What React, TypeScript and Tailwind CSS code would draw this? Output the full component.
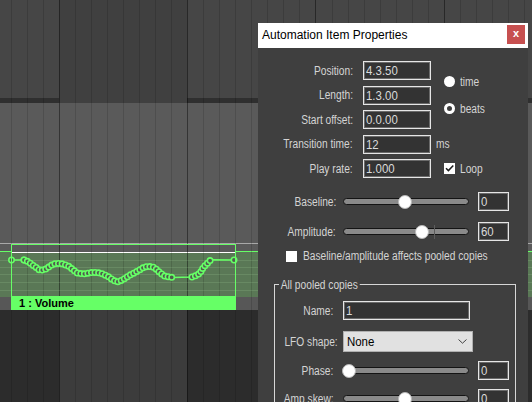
import React from 'react';

type Pt = [number, number];

// envelope shape, page coordinates
const WAVE: Pt[] = [
  [24, 260], [28.3, 261.7], [31.7, 264.3], [36, 267.3], [40, 270.5], [45, 269.5], [49.3, 266.7],
  [53.3, 264], [57.3, 263.3], [63.3, 264], [68.3, 266], [73.3, 270], [77.3, 273], [83.3, 274],
  [87.3, 273.3], [93.3, 272.3], [98.3, 272.7], [103.3, 274], [108.3, 276.7], [113, 280], [117, 282],
  [121, 280.5], [125, 278.3], [130, 275], [134, 273], [138, 270.7], [145, 266.7], [151.7, 266.5],
  [155, 268], [160, 272.7], [165, 276.3], [173, 277.5],
];
const RISE: Pt[] = [
  [192, 277], [195, 276], [200, 273.3], [203.3, 267.3], [207.3, 263.3], [211, 259.7],
];

function sample(pts: Pt[], step: number): Pt[] {
  const out: Pt[] = [pts[0]];
  let carry = 0;
  for (let i = 1; i < pts.length; i++) {
    const [x0, y0] = pts[i - 1];
    const [x1, y1] = pts[i];
    const len = Math.hypot(x1 - x0, y1 - y0);
    let d = step - carry;
    while (d <= len) {
      out.push([x0 + ((x1 - x0) * d) / len, y0 + ((y1 - y0) * d) / len]);
      d += step;
    }
    carry = len - (d - step);
  }
  return out;
}

function Envelope() {
  const line: Pt[] = [[11.5, 260], ...WAVE, ...RISE, [234, 260]];
  const dots: Pt[] = [[11.5, 260], [24, 260], ...sample(WAVE, 3.6), ...sample(RISE, 3.6), [234, 260]];
  return (
    <svg className="absolute left-0 top-0 overflow-visible" width={225} height={43} viewBox="11 253 225 43">
      <polyline
        points={line.map(([x, y]) => `${x},${y}`).join(' ')}
        fill="none"
        stroke="#66ff66"
        strokeWidth={1.6}
      />
      {dots.map(([x, y], i) => (
        <circle key={i} cx={x} cy={y} r={2.7} fill="#505a4e" stroke="#66ff66" strokeWidth={1.6} />
      ))}
    </svg>
  );
}

function GridLines() {
  const xs = Array.from({ length: 34 }, (_, k) => Math.floor(11 + k * 16.05));
  return (
    <svg className="absolute inset-0 pointer-events-none" width={532} height={402}>
      {xs.map((x, k) => (
        <line
          key={k}
          x1={x + 0.5}
          x2={x + 0.5}
          y1={0}
          y2={402}
          stroke={k % 8 === 3 ? 'rgba(0,0,0,0.42)' : 'rgba(0,0,0,0.13)'}
        />
      ))}
      {[260, 267, 274, 282, 290].map((y) => (
        <line key={y} x1={0} x2={532} y1={y + 0.5} y2={y + 0.5} stroke="rgba(200,255,190,0.13)" />
      ))}
    </svg>
  );
}

function LaneSide({ className }: { className: string }) {
  return (
    <div className={`flex flex-col ${className}`}>
      <div className="h-[7px] bg-[#5a5a5a]" />
      <div className="h-px bg-[#66ff66]" />
      <div className="h-[45px] bg-[#5a7856]" />
      <div className="h-[13px] bg-[#575757]" />
    </div>
  );
}

function AutomationItem() {
  return (
    <div className="relative flex w-[225px] flex-col">
      <div className="h-[8px] bg-[#5a5a5a]" />
      <div className="h-px bg-white" />
      <div className="relative h-[43px] bg-[#5a7856]">
        <div className="absolute inset-0 z-10">
          <Envelope />
        </div>
      </div>
      <div className="relative z-10 flex h-[14px] items-center bg-[#66ff66] pl-[8px] text-[11px] font-bold leading-none text-black">
        1 : Volume
      </div>
      <div className="pointer-events-none absolute inset-0 z-10 border border-[#66ff66]" />
    </div>
  );
}

// narrow dialog font: Arial metrics squeezed towards the narrow UI face
function Txt({
  children,
  right = false,
  field = false,
  className = '',
}: {
  children: React.ReactNode;
  right?: boolean;
  field?: boolean;
  className?: string;
}) {
  return (
    <span
      className={`inline-block whitespace-nowrap ${field ? 'scale-x-[0.88]' : 'scale-x-[0.85]'} ${
        right ? 'origin-right' : 'origin-left'
      } ${className}`}
    >
      {children}
    </span>
  );
}

function Field({ value, className = '' }: { value: string; className?: string }) {
  return (
    <div
      className={`flex h-[19px] items-center overflow-hidden border border-[#e6e6e6] bg-[#333333] pl-[2px] text-[13px] leading-none text-[#dadada] shadow-[inset_0_0_0_1px_#6a6a6a] ${className}`}
    >
      <Txt field>{value}</Txt>
    </div>
  );
}

function Slider({ thumb, tick }: { thumb: number; tick?: number }) {
  return (
    <div className="relative flex h-[14px] w-[126px] items-center">
      <div className="h-[7px] w-full rounded-full border border-[#141414] bg-[#8a8a8a]" />
      {tick !== undefined && <div className="absolute top-0 h-[14px] w-px bg-[#5c5c5c]" style={{ left: tick }} />}
      <div
        className="absolute top-0 h-[14px] w-[14px] rounded-full border border-[#b8b8b8] bg-white"
        style={{ left: thumb - 7 }}
      />
    </div>
  );
}

function Label({ children }: { children: React.ReactNode }) {
  return (
    <div className="flex items-center justify-end pr-[10px]">
      <Txt right>{children}</Txt>
    </div>
  );
}

function Dialog() {
  return (
    <div className="absolute left-[258px] top-[23px] flex h-[379px] w-[270px] flex-col overflow-hidden bg-[#3f3f3f] font-['Liberation_Sans',sans-serif] text-[12px] leading-[14px] text-[#d4d4d4]">
      {/* Title bar */}
      <div className="flex h-[25px] shrink-0 items-start justify-between bg-white pl-[4px] pr-[3px]">
        <span className="mt-[5px] text-[12px] leading-[14px] text-black">Automation Item Properties</span>
        <div className="mt-[2px] flex h-[19px] w-[18px] items-center justify-center bg-[#c75050] pb-[2px] text-[11px] font-bold leading-none text-white">
          x
        </div>
      </div>

      {/* Time fields */}
      <div className="mt-[13px] grid grid-cols-[105px_68px_1fr] grid-rows-[repeat(5,19px)] gap-y-[5.5px]">
        <div className="col-start-3 row-span-3 row-start-1 flex flex-col justify-center gap-[13px] pl-[13px]">
          <div className="flex items-center gap-[5px]">
            <div className="h-[11px] w-[11px] rounded-full bg-white" />
            <Txt>time</Txt>
          </div>
          <div className="flex items-center gap-[5px]">
            <div className="h-[11px] w-[11px] rounded-full border-[3px] border-white bg-[#3f3f3f]" />
            <Txt>beats</Txt>
          </div>
        </div>
        <Label>Position:</Label>
        <Field value="4.3.50" />
        <Label>Length:</Label>
        <Field value="1.3.00" />
        <Label>Start offset:</Label>
        <Field value="0.0.00" />
        <Label>Transition time:</Label>
        <Field value="12" />
        <div className="flex items-center pl-[5px]">
          <Txt>ms</Txt>
        </div>
        <Label>Play rate:</Label>
        <Field value="1.000" />
        <div className="flex items-center gap-[5px] pl-[13px]">
          <div className="flex h-[11px] w-[11px] items-center justify-center bg-white">
            <svg width="11" height="11" viewBox="0 0 11 11">
              <path d="M2 5.2 L4.4 7.6 L9.3 2.4" fill="none" stroke="#1e1e1e" strokeWidth="1.5" />
            </svg>
          </div>
          <Txt>Loop</Txt>
        </div>
      </div>

      {/* Baseline / amplitude */}
      <div className="mt-[14px] flex h-[19px] items-center">
        <div className="w-[78px] text-right">
          <Txt right>Baseline:</Txt>
        </div>
        <div className="ml-[7px]">
          <Slider thumb={62.3} />
        </div>
        <Field value="0" className="ml-[9px] w-[31px]" />
      </div>
      <div className="mt-[11px] flex h-[19px] items-center">
        <div className="w-[78px] text-right">
          <Txt right>Amplitude:</Txt>
        </div>
        <div className="ml-[7px]">
          <Slider thumb={79} tick={91} />
        </div>
        <Field value="60" className="ml-[9px] w-[31px]" />
      </div>
      <div className="mt-[8px] flex h-[14px] items-center gap-[6px] pl-[28px]">
        <div className="h-[11px] w-[11px] shrink-0 bg-white" />
        <Txt>Baseline/amplitude affects pooled copies</Txt>
      </div>

      {/* Pooled copies group */}
      <div className="relative ml-[16px] mt-[21px] h-[200px] w-[242px] shrink-0 border border-[#d6d6d6] pt-[16px]">
        <div className="absolute -top-[7px] left-[4px] flex">
          <Txt className="bg-[#3f3f3f] px-[2px]">All pooled copies</Txt>
        </div>
        <div className="flex h-[19px] items-center">
          <div className="w-[58px] text-right">
            <Txt right>Name:</Txt>
          </div>
          <Field value="1" className="ml-[10px] w-[127px]" />
        </div>
        <div className="mt-[11px] flex h-[21px] items-center">
          <div className="w-[58px] text-right">
            <Txt right>LFO shape:</Txt>
          </div>
          <div className="ml-[10px] flex h-[21px] w-[130px] items-center justify-between border border-[#b0b0b0] bg-[#e1e1e1] pl-[3px] pr-[5px] text-[13px] leading-none text-black">
            <Txt field>None</Txt>
            <svg width="9" height="5" viewBox="0 0 9 5">
              <path d="M0.5 0.5 L4.5 4.2 L8.5 0.5" fill="none" stroke="#444" strokeWidth="1" />
            </svg>
          </div>
        </div>
        <div className="mt-[9px] flex h-[19px] items-center">
          <div className="w-[58px] text-right">
            <Txt right>Phase:</Txt>
          </div>
          <div className="ml-[10px]">
            <Slider thumb={6.3} />
          </div>
          <Field value="0" className="ml-[9px] w-[31px]" />
        </div>
        <div className="mt-[9px] flex h-[19px] items-center">
          <div className="w-[58px] text-right">
            <Txt right>Amp skew:</Txt>
          </div>
          <div className="ml-[10px]">
            <Slider thumb={62.3} />
          </div>
          <Field value="0" className="ml-[9px] w-[31px]" />
        </div>
      </div>
    </div>
  );
}

export default function App() {
  return (
    <div className="relative h-[402px] w-[532px] overflow-hidden bg-[#454545] font-['Liberation_Sans',sans-serif]">
      <div className="flex flex-col">
        {/* upper track */}
        <div className="flex h-[98px]">
          <div className="w-[59px] bg-[#464646]" />
          <div className="w-[128px] bg-[#404040]" />
          <div className="flex-1 bg-[#464646]" />
        </div>
        <div className="flex h-[5px]">
          <div className="w-[59px] bg-[#2f2f2f]" />
          <div className="w-[128px] bg-[#404040]" />
          <div className="flex-1 bg-[#2f2f2f]" />
        </div>
        {/* volume track */}
        <div className="h-[140px] bg-[#5a5a5a]" />
        <div className="h-px bg-[#a8a8a8]" />
        {/* automation lane */}
        <div className="flex h-[66px]">
          <LaneSide className="w-[11px]" />
          <AutomationItem />
          <LaneSide className="flex-1" />
        </div>
        {/* lower track */}
        <div className="flex h-[92px]">
          <div className="w-[59px] bg-[#2c2c2c]" />
          <div className="w-[128px] bg-[#3c3c3c]" />
          <div className="flex-1 bg-[#2c2c2c]" />
        </div>
      </div>
      <GridLines />
      <Dialog />
    </div>
  );
}
